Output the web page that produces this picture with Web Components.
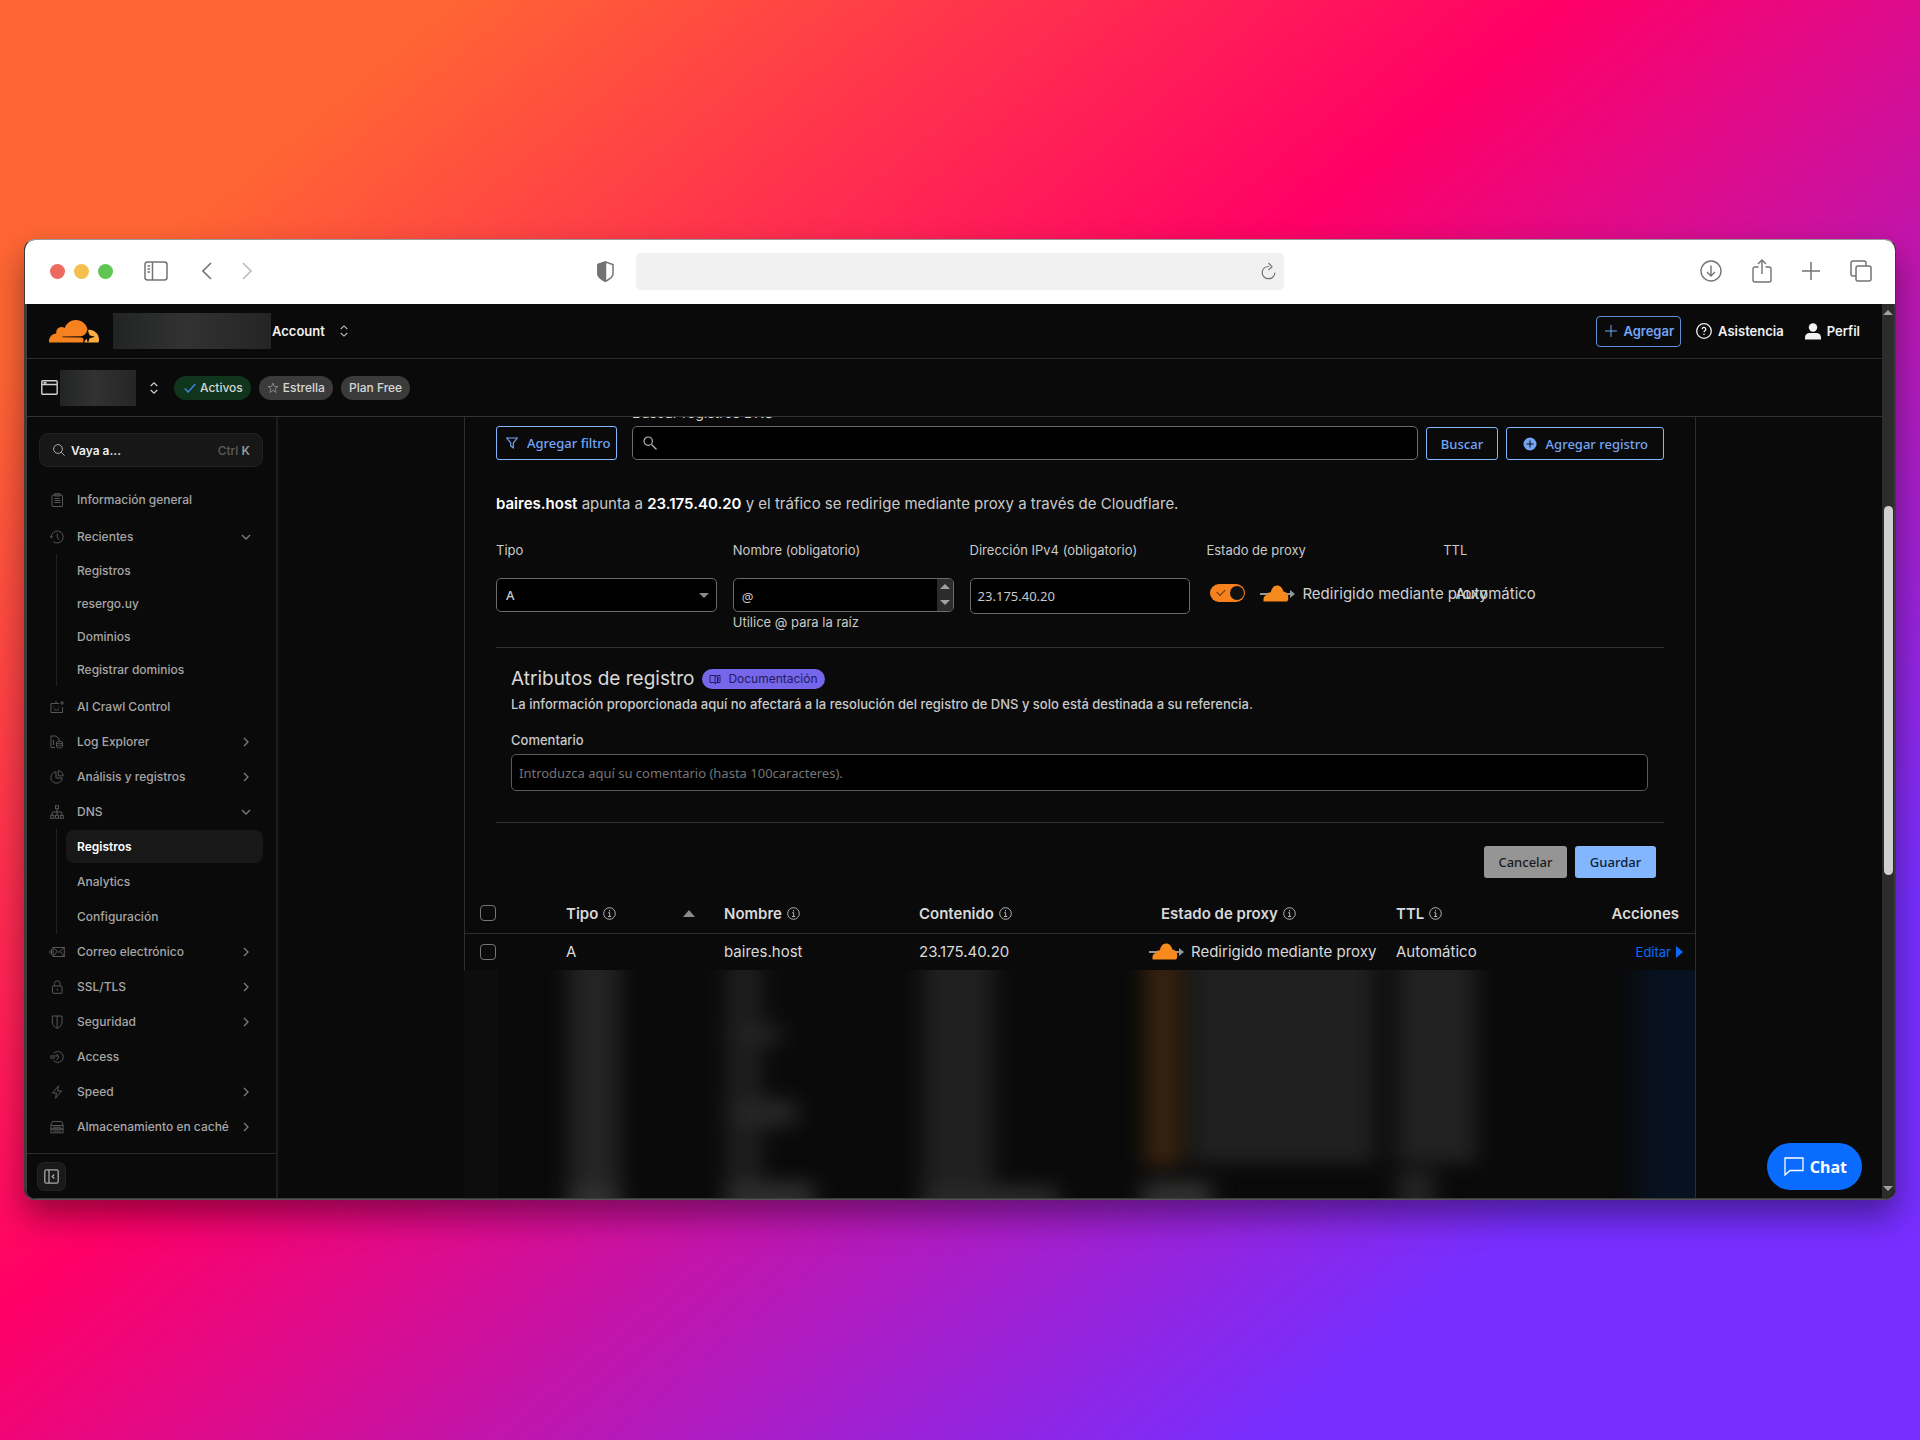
<!DOCTYPE html>
<html lang="es">
<head>
<meta charset="utf-8">
<meta name="viewport" content="width=device-width, initial-scale=1">
<title>Registros DNS</title>
<style>
  html, body { margin: 0; height: 100%; }
  body {
    box-sizing: border-box;
    min-height: 100vh;
    padding: 239px 24px 240px;
    display: flex;
    font-family: Inter, "Noto Sans", sans-serif;
    color: #d9d9d9;
    background: linear-gradient(140deg, #ff6633 12%, #ff0066 43%, #772eff 82%);
    --bg: #0a0a0a;
    --line: #2b2b2b;
    --blue: #82b6ff;
    --ui: "Noto Sans", "Open Sans", sans-serif;
  }
</style>
</head>
<body>
<browser-window>
  <browser-toolbar slot="toolbar"></browser-toolbar>
  <dash-app></dash-app>
</browser-window>

<script>
const ICONS = {
  panel: ['0 0 24 20', '<rect x="1" y="1" width="22" height="18" rx="2.5"/><path d="M8.5 1v18M3.5 5h2.5M3.5 8h2.5M3.5 11h2.5"/>'],
  back: ['0 0 10 18', '<path d="M9 1 1 9l8 8"/>'],
  forward: ['0 0 10 18', '<path d="m1 1 8 8-8 8"/>'],
  shield: ['0 0 17 21', '<path d="M8.500 1 1 3.500V13c0 3 3 5 7.500 7.300C13 18 16 16 16 13V3.500z"/><path d="M8.500 1 1 3.500V13c0 3 3 5 7.500 7.300z" fill="currentColor"/>'],
  reload: ['0 0 15 18', '<path d="M8 4.500C4 4.500 1.200 7 1.200 10.700a6.300 6 0 0 0 12.600 0"/><path d="M7.500 1l3.500 3.700L7.500 8.200"/>'],
  download: ['0 0 22 22', '<circle cx="11" cy="11" r="10"/><path d="M11 5.500v10M7 12l4 4 4-4"/>'],
  share: ['0 0 20 24', '<path d="M6.500 8H3a2 2 0 0 0-2 2v11a2 2 0 0 0 2 2h14a2 2 0 0 0 2-2V10a2 2 0 0 0-2-2h-3.500M10 15V1M6 5l4-4 4 4"/>'],
  plus: ['0 0 18 18', '<path d="M9 0v18M0 9h18"/>'],
  tabs: ['0 0 22 22', '<rect x="6" y="6" width="15" height="15" rx="2"/><path d="M6 16H3a2 2 0 0 1-2-2V3a2 2 0 0 1 2-2h11a2 2 0 0 1 2 2v3"/>'],
  updown: ['0 0 8 12', '<path d="M.7 4 4 .9 7.300 4M.7 8 4 11.100 7.300 8"/>'],
  help: ['0 0 16 16', '<circle cx="8" cy="8" r="7.300"/><path d="M6.200 6.300a1.800 1.800 0 1 1 2.700 1.500c-.7.4-.9.7-.9 1.400M8 10.700v1.300"/>'],
  person: ['0 0 16 17', '<g fill="currentColor" stroke="none"><circle cx="8" cy="4.500" r="4.200"/><path d="M0 16.500v-2C0 11.500 2 10 4.500 10h7c2.500 0 4.500 1.500 4.500 4.500v2z"/></g>'],
  window: ['0 0 17 15', '<rect x=".8" y=".8" width="15.400" height="13.400" rx="1"/><path d="M1 4.500h15M2.500 2.700h3"/>'],
  check: ['0 0 12 10', '<path d="m.7 5.500 3.500 3.500L11.300 1"/>'],
  star: ['0 0 14 14', '<path d="m7 1.200 1.600 4h4.200L9.500 7.900l1.200 4.400L7 9.800l-3.700 2.500 1.200-4.400L1.200 5.200h4.200z"/>'],
  search: ['0 0 12 12', '<circle cx="5" cy="5" r="4.400"/><path d="m8.200 8.200 3.400 3.400"/>'],
  searchbig: ['0 0 14 14', '<circle cx="5.200" cy="5.200" r="4.200"/><path d="m8.500 8.500 5 5"/>'],
  down: ['0 0 10 6', '<path d="m1 1 4 4 4-4"/>'],
  right: ['0 0 6 10', '<path d="m1 1 4 4-4 4"/>'],
  clipboard: ['0 0 14 14', '<rect x="2" y="2" width="10.500" height="11.500" rx=".5"/><path d="M4.500 2V.7h5.500V3H4.500zM4.500 5.500h5M4.500 7.500h6M4.500 9.500h6"/>'],
  clock: ['0 0 14 14', '<path d="M1.200 7a6 6 0 1 1 2 4.500M0 6l1.400 2L3 6.500M7.300 3.500V7l2 3"/>'],
  robot: ['0 0 14 14', '<path d="M9 3.500H1v9h11.500V7M6 3.500V1M12 1v4M10 3h4M4 6.500v1M9 6.500v1M4 9c1 1.500 4 1.500 5 0"/>'],
  logs: ['0 0 14 14', '<path d="M5 12.500H1V1h5l3 3v2M3.500 5v5"/><ellipse cx="9.500" cy="7.500" rx="3" ry="1.300"/><path d="M6.500 7.500v4.200c0 1.600 6 1.600 6 0V7.500M6.500 9.700c0 1.500 6 1.500 6 0"/>'],
  pie: ['0 0 14 14', '<path d="M6 1.800A5.700 5.700 0 1 0 12.200 8H6z"/><path d="M8.200.8v5h5a5 5 0 0 0-5-5z"/>'],
  tree: ['0 0 14 14', '<rect x="5.500" y=".7" width="3" height="3"/><rect x=".7" y="10.300" width="3" height="3"/><rect x="5.500" y="10.300" width="3" height="3"/><rect x="10.300" y="10.300" width="3" height="3"/><path d="M7 3.700v6.500M2.200 10.300V7h9.600v3.300"/>'],
  mail: ['0 0 16 14', '<rect x="4" y="2.500" width="11.300" height="9"/><path d="m4 2.500 5.700 5 5.600-5M4 11.500l4-5M15.300 11.500l-4-5M2.500 4v6M.8 5.500v3"/>'],
  lock: ['0 0 14 14', '<rect x="2.500" y="6" width="9.500" height="7.300" rx=".5"/><path d="M4.500 6V3.500a2.700 2.700 0 0 1 5.500 0V6M7.300 8.700v2"/>'],
  badge: ['0 0 14 14', '<path d="M2.300 1h9.700v6c0 3.500-2.500 5.500-4.800 6.300C4.800 12.500 2.300 10.500 2.300 7zM7.100 1v12"/>'],
  access: ['0 0 14 14', '<path d="M3.500 3.500a5.500 5.500 0 1 1 0 7M0 6h8M0 8h5M6.500 3.800 9 7 6.500 10.200"/>'],
  bolt: ['0 0 14 14', '<path d="M8.500.8 2.500 8h4l-1 5.300L11.500 6h-4z"/>'],
  drive: ['0 0 14 14', '<path d="M2.500 1.500h9L13 4.500v1H1v-1z"/><rect x="1" y="5.500" width="12" height="3.500"/><rect x="1" y="9" width="12" height="3.800"/><path d="M3 7.200h8M3 11h8"/>'],
  collapse: ['0 0 15 15', '<rect x=".8" y=".8" width="13.400" height="13.400" rx="1.500"/><path d="M5 1v13M10.200 5.500l-2 2 2 2"/>'],
  filter: ['0 0 12 12', '<path d="M.7 1h10.600L7.300 6v4.800L4.700 9V6z"/>'],
  addcircle: ['0 0 14 14', '<circle cx="7" cy="7" r="6.500" fill="currentColor" stroke="none"/><path d="M7 3.500v7M3.500 7h7" stroke="#0a0a0a"/>'],
  info: ['0 0 13 13', '<circle cx="6.500" cy="6.500" r="5.800"/><path d="M6.500 3v1.400M5.200 5.700h1.500V9.500M5 9.500h3.200"/>'],
  book: ['0 0 12 10', '<path d="M6 1.500H1v7h4l1 1 1-1h4v-7H7.500M6 1.500v8M6 1.500 8.500 3v5L6 9.500M9 4h1M9 6h1"/>'],
  chat: ['0 0 20 19', '<path d="M1 1h18v12.500H6L1 18z"/>'],
  logo: ['0 6.3 24 11.2', '<g stroke="none"><path fill="#f6821f" d="M16.5088 16.8447c.1475-.5068.0908-.9707-.1553-1.3154-.2246-.3164-.6045-.499-1.0615-.5205l-8.6592-.1123a.1559.1559 0 0 1-.1333-.0713c-.0283-.042-.0351-.0986-.021-.1553.0278-.084.1123-.1484.2036-.1562l8.7359-.1123c1.0351-.0489 2.1601-.8868 2.5537-1.9136l.499-1.3013c.0215-.0561.0293-.1128.0147-.168-.5625-2.5463-2.835-4.4453-5.5499-4.4453-2.5039 0-4.6284 1.6177-5.3876 3.8614-.4927-.3658-1.1187-.5625-1.794-.499-1.2026.119-2.1665 1.083-2.2861 2.2856-.0283.31-.0069.6128.0635.894C1.5683 13.171 0 14.7754 0 16.752c0 .1748.0142.3515.0352.5273.0141.083.0844.1475.1689.1475h15.9814c.0909 0 .1758-.0645.2032-.1553l.12-.4268z"/><path fill="#fbad41" d="M19.2656 11.2813c-.0771 0-.1611 0-.2383.0112-.0566 0-.1054.0415-.127.0976l-.3378 1.1744c-.1475.5068-.0918.9707.1543 1.3164.2256.3164.6055.498 1.0625.5195l1.8437.1133c.0557 0 .1055.0263.1329.0703.0283.043.0351.1074.0214.1562-.0283.084-.1132.1485-.204.1553l-1.921.1123c-1.041.0488-2.1582.8867-2.5527 1.914l-.1406.3585c-.0283.0713.0215.1416.0986.1416h6.5977c.0771 0 .1474-.0489.169-.126.1122-.4082.1757-.837.1757-1.2803 0-2.6025-2.125-4.727-4.7344-4.727"/><path fill="#0a0a0a" d="m18.700 11.800.75 2.150 2.150.75-2.150.75-.75 2.150-.75-2.150-2.150-.75 2.150-.75z"/></g>'],
  cloud: ['0 0 35 17', '<g stroke="none"><path fill="#92979b" d="M0 8h30V5l5 4-5 4v-3H0z"/><path fill="#f68a1d" d="M3.500 16.500v-2.300c0-2.400 1.700-4 3.600-4.100C7.300 8 9 7 10.800 7.400 11.600 3.300 13.800.5 17 .5c3.400 0 5.800 2.600 6.300 6.100 3 .2 5 2.700 5 6.400 0 1.500-.4 2.600-1.300 3.500z"/></g>']
};

function define(name, css, html) {
  const tpl = document.createElement('template');
  tpl.innerHTML = '<style>*{box-sizing:border-box}' + css + '</style>' + html;
  customElements.define(name, class extends HTMLElement {
    connectedCallback() {
      if (this.shadowRoot) return;
      this.attachShadow({ mode: 'open' }).append(tpl.content.cloneNode(true));
    }
  });
}

/* <ui-icon name w h sw>: one glyph from the icon table */
customElements.define('ui-icon', class extends HTMLElement {
  connectedCallback() {
    if (this.shadowRoot) return;
    const [box, body] = ICONS[this.getAttribute('name')];
    const [, , w, h] = box.split(' ');
    const width = this.getAttribute('w') || w, height = this.getAttribute('h') || h;
    this.attachShadow({ mode: 'open' }).innerHTML =
      `<style>:host{display:inline-flex;flex:none}svg{display:block}</style>
       <svg viewBox="${box}" width="${width}" height="${height}" fill="none" stroke="currentColor" stroke-width="${this.getAttribute('sw') || 1}" aria-hidden="true">${body}</svg>`;
  }
});

define('browser-window', `
  :host { display: flex; flex-direction: column; flex: 1; min-width: 0; overflow: hidden;
    border: 1px solid #8a8a8a; border-color: #9a9a9a #3c3c3c #555 #3c3c3c; border-radius: 11px; background: var(--bg);
    box-shadow: 0 16px 32px rgba(0,0,0,.4); }
  main { flex: 1; display: flex; min-height: 0; border: solid #3c3c3c; border-width: 0 1px 1px 2px; border-radius: 0 0 9px 9px; overflow: hidden; }
  ::slotted(*) { flex: 1; }
  ::slotted([slot=toolbar]) { flex: none; }`,
  `<slot name="toolbar"></slot><main><slot></slot></main>`);

define('browser-toolbar', `
  :host { display: grid; grid-template-columns: 1fr 34.6% 1fr; align-items: center; box-sizing: border-box; height: 64px; padding-bottom: 2px; background: #fff; color: #737373; }
  .l, .r { display: flex; align-items: center; }
  .l { padding: 0 22px 0 25px; }
  .dots { display: flex; gap: 9px; margin-right: 31px; }
  i { width: 15px; height: 15px; border-radius: 50%; }
  button { all: unset; display: flex; }
  .back { margin-left: 34px; } .fwd { margin-left: 30px; color: #bdbdbd; }
  .sh { margin-left: auto; }
  .r { justify-content: flex-end; gap: 30px; padding-right: 23px; }
  .url { display: flex; align-items: center; height: 37px; background: #f1f1f1; border-radius: 5px; padding-right: 8px; }
  input { all: unset; flex: 1; min-width: 0; }`,
  `<div class="l"><div class="dots"><i style="background:#ed6a5e"></i><i style="background:#f5bf4f"></i><i style="background:#61c554"></i></div>
    <button aria-label="Panel lateral"><ui-icon name="panel" sw="1.5"></ui-icon></button>
    <button class="back" aria-label="Atrás"><ui-icon name="back" sw="1.6"></ui-icon></button>
    <button class="fwd" aria-label="Adelante"><ui-icon name="forward" sw="1.6"></ui-icon></button>
    <ui-icon class="sh" name="shield" sw="1.5"></ui-icon></div>
  <div class="url"><input aria-label="Dirección web"><button aria-label="Recargar"><ui-icon name="reload" sw="1.200"></ui-icon></button></div>
  <div class="r"><button aria-label="Descargas"><ui-icon name="download" sw="1.400"></ui-icon></button>
    <button aria-label="Compartir"><ui-icon name="share" sw="1.400"></ui-icon></button>
    <button aria-label="Nueva pestaña"><ui-icon name="plus" sw="1.500"></ui-icon></button>
    <button aria-label="Pestañas"><ui-icon name="tabs" sw="1.500"></ui-icon></button></div>`);

define('dash-app', `
  :host { display: flex; min-width: 0; min-height: 0; background: var(--bg); }
  .page { flex: 1; min-width: 0; display: flex; flex-direction: column; position: relative; }
  .body { flex: 1; min-height: 0; display: flex; }
  main { flex: 1; min-width: 0; overflow: hidden; }
  chat-button { position: absolute; right: 20px; bottom: 8px; }`,
  `<div class="page"><account-bar></account-bar><zone-bar></zone-bar>
     <div class="body"><side-nav></side-nav><main><dns-card></dns-card></main></div>
     <chat-button></chat-button></div>
   <page-scrollbar></page-scrollbar>`);

define('page-scrollbar', `
  :host { display: flex; flex-direction: column; align-items: center; justify-content: space-between; width: 12px; padding: 6px 0 7px; background: #2c2c2c; }
  .up, .dn { border: 5px solid transparent; border-top: 0; border-bottom-color: #a0a0a0; }
  .dn { border: 5px solid transparent; border-bottom: 0; border-top-color: #a0a0a0; }
  .rail { flex: 1; display: flex; flex-direction: column; }
  .rail::before { content: ''; flex: 191; } .rail::after { content: ''; flex: 311; }
  .thumb { flex: 370; width: 9px; border-radius: 5px; background: #cfcfcf; }`,
  `<span class="up"></span><div class="rail"><div class="thumb"></div></div><span class="dn"></span>`);

define('redacted-box', `
  :host { display: block; height: 36px; background: linear-gradient(90deg, #222424, #323232 45%, #252525); }`, ``);

define('account-bar', `
  :host { display: flex; align-items: center; height: 55px; padding: 0 22px 0 22px; border-bottom: 1px solid var(--line); font-size: 13px; font-weight: 600; color: #f2f2f2; }
  :host, button, a { box-sizing: border-box; }
  redacted-box { width: 158px; margin: 0 1px 0 14px; }
  button, a { all: unset; box-sizing: border-box; display: flex; align-items: center; cursor: pointer; }
  .acc { gap: 15px; color: #f2f2f2; }
  .acc ui-icon { color: #bbb; }
  .right { margin-left: auto; display: flex; align-items: center; }
  .add { height: 31px; padding: 0 6px 0 8px; gap: 6px; border: 1px solid #5d8ed6; border-radius: 4px; color: #74a5f5; margin-right: 15px; }
  .help { gap: 6px; margin-right: 21px; } .me { gap: 6px; }`,
  `<a href="#" aria-label="Inicio"><ui-icon name="logo" w="50" h="24"></ui-icon></a><redacted-box></redacted-box>
   <button class="acc">Account<ui-icon name="updown" sw="1.100"></ui-icon></button>
   <div class="right"><button class="add"><ui-icon name="plus" w="12" h="12" sw="1.500"></ui-icon>Agregar</button>
   <button class="help"><ui-icon name="help" sw="1.300"></ui-icon>Asistencia</button>
   <button class="me"><ui-icon name="person"></ui-icon>Perfil</button></div>`);

define('status-pill', `
  :host { display: inline-flex; align-items: center; gap: 4px; height: 24px; padding: 0 8px; border-radius: 12px; background: #3b3b3b; color: #d6d6d6; font-size: 12px; font-weight: 500; white-space: nowrap; box-sizing: border-box; }
  :host([green]) { background: #0f361d; padding-left: 10px; }`, `<slot></slot>`);

define('zone-bar', `
  :host { display: flex; align-items: center; height: 58px; box-sizing: border-box; padding-left: 14px; border-bottom: 1px solid #333; color: #d0d0d0; }
  redacted-box { width: 76px; margin: 0 14px 0 2px; }
  button { all: unset; display: flex; margin-right: 16px; }
  .pills { display: flex; gap: 8px; }`,
  `<ui-icon name="window" sw="1.400"></ui-icon><redacted-box></redacted-box>
   <button aria-label="Cambiar dominio"><ui-icon name="updown" sw="1.200"></ui-icon></button>
   <div class="pills"><status-pill green><ui-icon name="check" sw="1.300" style="color:#3f86e8"></ui-icon>Activos</status-pill>
   <status-pill><ui-icon name="star" w="12" h="12" style="color:#8f8f8f"></ui-icon>Estrella</status-pill><status-pill>Plan Free</status-pill></div>`);

/* <nav-item icon arrow sub active>label</nav-item> */
customElements.define('nav-item', class extends HTMLElement {
  connectedCallback() {
    if (this.shadowRoot) return;
    const icon = this.getAttribute('icon'), arrow = this.getAttribute('arrow');
    this.attachShadow({ mode: 'open' }).innerHTML = `<style>
      *{box-sizing:border-box}
      :host { display: flex; align-items: center; height: 35px; }
      a { flex: 1; display: flex; align-items: center; height: 33px; padding: 0 12px 0 11px; border-radius: 8px; color: #a6a6a6; text-decoration: none; white-space: nowrap; }
      .ic { width: 14px; display: flex; justify-content: center; margin-right: 13px; color: #565656; }
      .ar { margin-left: auto; width: 10px; display: flex; justify-content: center; color: #7d7d7d; }
      :host([active]) a { background: #181818; color: #fff; font-weight: 600; }
      :host([short]) { height: 33px; }
    </style><a href="#">${icon ? `<span class="ic"><ui-icon name="${icon}"></ui-icon></span>` : ''}<slot></slot>${arrow ? `<span class="ar"><ui-icon name="${arrow}" sw="1.300"></ui-icon></span>` : ''}</a>`;
  }
});

define('side-nav', `
  :host { display: flex; flex-direction: column; width: 251px; border-right: 2px solid #1d1d1d; font-size: 12px; font-weight: 500; }
  .go { display: flex; align-items: center; gap: 6px; height: 34px; margin: 16px 13px 15px 12px; padding: 0 12px 0 13px; border: 1px solid #222; border-radius: 9px; background: #171717; color: #ededed; }
  .go button { all: unset; flex: 1; font-size: 12px; font-weight: 600; }
  .go ui-icon { color: #aaa; }
  kbd { font: 500 12px Inter, sans-serif; color: #5c5c5c; } kbd b { font-weight: 600; color: #999; }
  nav { flex: 1; padding: 0 13px 0 12px; }
  .gap { margin-bottom: 2px; }
  .sub { margin: 0 0 0 17px; padding-left: 9px; border-left: 1px solid #222; }
  .rec { margin-bottom: 3px; }
  .foot { display: flex; align-items: center; height: 45px; padding-left: 10px; border-top: 1px solid var(--line); }
  .foot button { all: unset; display: grid; place-items: center; width: 29px; height: 29px; border-radius: 7px; background: #1a1a1a; outline: 1px solid #232323; outline-offset: -1px; color: #a8a8a8; }`,
  `<div class="go"><ui-icon name="search"></ui-icon><button>Vaya a...</button><kbd>Ctrl <b>K</b></kbd></div>
  <nav>
    <nav-item class="gap" icon="clipboard">Información general</nav-item>
    <nav-item icon="clock" arrow="down">Recientes</nav-item>
    <div class="sub rec"><nav-item short>Registros</nav-item><nav-item short>resergo.uy</nav-item><nav-item short>Dominios</nav-item><nav-item short>Registrar dominios</nav-item></div>
    <nav-item icon="robot">AI Crawl Control</nav-item>
    <nav-item icon="logs" arrow="right">Log Explorer</nav-item>
    <nav-item icon="pie" arrow="right">Análisis y registros</nav-item>
    <nav-item icon="tree" arrow="down">DNS</nav-item>
    <div class="sub"><nav-item active>Registros</nav-item><nav-item>Analytics</nav-item><nav-item>Configuración</nav-item></div>
    <nav-item icon="mail" arrow="right">Correo electrónico</nav-item>
    <nav-item icon="lock" arrow="right">SSL/TLS</nav-item>
    <nav-item icon="badge" arrow="right">Seguridad</nav-item>
    <nav-item icon="access">Access</nav-item>
    <nav-item icon="bolt" arrow="right">Speed</nav-item>
    <nav-item icon="drive" arrow="right">Almacenamiento en caché</nav-item>
  </nav>
  <div class="foot"><button aria-label="Contraer menú"><ui-icon name="collapse" sw="1.300"></ui-icon></button></div>`);

define('chat-button', `
  button { all: unset; box-sizing: border-box; display: flex; align-items: center; gap: 6px; height: 47px; padding: 0 15px 0 17px; border-radius: 24px; background: #0a6cff; color: #fff; font: 700 16px/24px var(--ui); cursor: pointer; }`,
  `<button><ui-icon name="chat" w="20" h="19" sw="1.300"></ui-icon>Chat</button>`);

define('dns-card', `
  :host { display: block; max-width: 1232px; margin: 0 auto; }
  .top { border: solid #2e2e2e; border-width: 0 1px; }`,
  `<div class="top"><search-row></search-row><record-form></record-form><dns-table></dns-table></div><blurred-rows></blurred-rows>`);

define('search-row', `
  :host { display: flex; align-items: flex-end; margin: -15px 31px 0; padding-bottom: 32px; font-size: 14px; }
  button { box-sizing: border-box; margin: 0; height: 33px; padding: 0 11px; display: flex; align-items: center; border: 1px solid #82b6ff; border-radius: 3px; background: transparent; color: #74a5f5; font: 500 13px/18px var(--ui); white-space: nowrap; cursor: pointer; }
  .f { gap: 9px; width: 121px; padding: 0 7px 0 9px; height: 34px; }
  .q { flex: 1; min-width: 0; margin: 0 8px 0 15px; display: flex; flex-direction: column; }
  label { height: 24px; line-height: 22px; color: #d9d9d9; }
  .box { display: flex; align-items: center; height: 34px; padding-left: 10px; border: 1px solid #6b6b6b; border-radius: 5px; background: #000; color: #b5b5b5; }
  input { all: unset; flex: 1; min-width: 0; padding: 0 8px; }
  .b { width: 72px; justify-content: center; margin-right: 8px; }
  .r { width: 158px; padding: 0 15px 0 16px; justify-content: space-between; }
  `,
  `<button class="f"><ui-icon name="filter" sw="1.200"></ui-icon>Agregar filtro</button>
   <div class="q"><label for="q">Buscar registros DNS</label><div class="box"><ui-icon name="searchbig" sw="1.200"></ui-icon><input id="q"></div></div>
   <button class="b">Buscar</button><button class="r"><ui-icon name="addcircle"></ui-icon>Agregar registro</button>`);

define('record-form', `
  :host { display: block; margin: 0 31px; font-size: 14px; color: #c9c9c9; }
  p { margin: 0; }
  .sum { font-size: 15px; line-height: 24px; margin-bottom: 21px; } .sum b { color: #fff; font-weight: 600; }
  .grid { display: grid; grid-template-columns: repeat(5, minmax(0, 1fr)); gap: 16px; height: 111px; border-bottom: 1px solid #333; font-size: 13px; }
  .grid > div { padding-top: 3px; white-space: nowrap; }
  .lb { display: block; line-height: 20px; margin-bottom: 18px; }
  .field, select, .ip { width: 100%; height: 34px; border: 1px solid #6b6b6b; border-radius: 5px; background: #000; color: #c9c9c9; font: 13px/20px var(--ui); }
  .field { display: flex; overflow: hidden; }
  select { appearance: none; padding: 0 9px; font-weight: 500; display: block; }
  .sel { display: grid; } .sel > * { grid-area: 1/1; }
  .sel span { justify-self: end; align-self: center; margin-right: 8px; border: 5px solid transparent; border-bottom: 0; border-top-color: #8a8a8a; }
  textarea { flex: 1; min-width: 0; border: 0; padding: 8px 8px 0; background: none; resize: none; overflow: hidden; color: inherit; font: inherit; }
  .spin { width: 16px; background: #2c2c2c; display: flex; flex-direction: column; align-items: center; justify-content: space-between; padding: 5px 0 6px; }
  .spin i { border: 5px solid transparent; border-top: 0; border-bottom-color: #a0a0a0; }
  .spin i + i { border: 5px solid transparent; border-bottom: 0; border-top-color: #a0a0a0; }
  .ip { height: 36px; padding: 0 7px; }
  .hint { display: block; line-height: 20px; }
  .proxy { display: flex; align-items: center; height: 30px; padding-left: 4px; font-size: 15px; color: #d0d0d0; }
  .proxy input { appearance: none; margin: 0 15px 0 0; width: 35px; height: 18px; border-radius: 9px; background: #f6821f; border: 0; display: flex; align-items: center; flex: none; }
  .proxy input::before { content: ''; width: 7px; height: 4px; margin: -3px 0 0 7px; border: solid #5a2f08; border-width: 0 0 1px 1px; rotate: -45deg; }
  .proxy input::after { content: ''; width: 14px; height: 14px; margin-left: 5px; border-radius: 50%; background: #111; }
  .proxy label { margin-left: 7px; }
  .ttl { line-height: 32px; padding-left: 12px; font-size: 15px; color: #d0d0d0; display: block; }
  .attr { padding: 18px 16px 31px 15px; border-bottom: 1px solid #333; }
  h3 { margin: 0; font-size: 19px; font-weight: 400; line-height: 26px; color: #d9d9d9; display: flex; align-items: center; gap: 8px; }
  .doc { display: inline-flex; align-items: center; gap: 7px; height: 20px; padding: 0 7px; border-radius: 10px; background: #7566ea; color: #211a63; font-size: 12px; text-decoration: none; }
  .note { font-size: 13px; font-weight: 500; line-height: 18px; margin-top: 3px; color: #c9c9c9; }
  .cl { display: block; font-size: 13px; font-weight: 500; line-height: 20px; margin: 17px 0 4px; color: #c9c9c9; }
  .com { display: block; width: 100%; height: 37px; border: 1px solid #5a5a5a; border-radius: 5px; background: #000; color: #ccc; padding: 0 7px; font: 13px/20px var(--ui); }
  .com::placeholder { color: #757575; opacity: 1; }
  .act { display: flex; justify-content: flex-end; gap: 8px; padding: 23px 8px 16px; }
  .act button { height: 32px; border: 0; border-radius: 3px; padding: 0; width: 83px; background: #959595; color: #1b1b1b; font: 500 13px/18px var(--ui); }
  .act .save { width: 81px; background: #82b6ff; color: #0d1d36; }`,
  `<p class="sum"><b>baires.host</b> apunta a <b>23.175.40.20</b> y el tráfico se redirige mediante proxy a través de Cloudflare.</p>
  <div class="grid">
    <div><label class="lb" for="t">Tipo</label><div class="sel"><select id="t"><option>A</option></select><span></span></div></div>
    <div><label class="lb" for="n">Nombre (obligatorio)</label><div class="field"><textarea id="n" rows="1">@</textarea><div class="spin"><i></i><i></i></div></div><span class="hint">Utilice @ para la raíz</span></div>
    <div><label class="lb" for="ip">Dirección IPv4 (obligatorio)</label><input class="ip" id="ip" value="23.175.40.20"></div>
    <div><span class="lb">Estado de proxy</span><div class="proxy"><input type="checkbox" role="switch" id="px" checked><ui-icon name="cloud" w="35" h="17"></ui-icon><label for="px">Redirigido mediante proxy</label></div></div>
    <div><span class="lb">TTL</span><span class="ttl">Automático</span></div>
  </div>
  <div class="attr"><h3>Atributos de registro <a class="doc" href="#"><ui-icon name="book"></ui-icon>Documentación</a></h3>
    <p class="note">La información proporcionada aquí no afectará a la resolución del registro de DNS y solo está destinada a su referencia.</p>
    <label class="cl" for="c">Comentario</label><input class="com" id="c" placeholder="Introduzca aquí su comentario (hasta 100caracteres)."></div>
  <div class="act"><button>Cancelar</button><button class="save">Guardar</button></div>`);

define('dns-table', `
  :host { display: block; font-size: 15px; color: #d9d9d9; }
  table { width: 100%; border-collapse: collapse; table-layout: fixed; }
  th, td { padding: 0; text-align: left; white-space: nowrap; font-weight: 400; }
  th { height: 39px; font-weight: 600; border-bottom: 1px solid #2b2b2b; }
  td { height: 37px; }
  .in { display: flex; align-items: center; gap: 5px; }
  .in ui-icon { color: #b5b5b5; }
  input { appearance: none; display: block; margin: 0 0 0 15px; width: 16px; height: 16px; border: 1px solid #767676; border-radius: 4px; background: transparent; }
  .sort { margin: 0 29px 0 auto; border: 6px solid transparent; border-top: 0; border-bottom: 7px solid #8a8a8a; }
  .px { gap: 7px; } 
  th .px { padding-left: 12px; gap: 5px; }
  .r { justify-content: flex-end; padding-right: 16px; }
  td .r { padding-right: 12px; }
  a { color: #0b6bff; text-decoration: none; font-size: 13px; display: flex; align-items: center; gap: 5px; }
  a::after { content: ''; border: 6px solid transparent; border-right: 0; border-left: 7px solid #0b6bff; }`,
  `<table><colgroup><col style="width:101px"><col style="width:158px"><col style="width:195px"><col style="width:230px"><col style="width:247px"><col style="width:150px"><col></colgroup>
  <thead><tr><th><input type="checkbox" aria-label="Seleccionar todo"></th><th><div class="in">Tipo <ui-icon name="info"></ui-icon><span class="sort"></span></div></th><th><div class="in">Nombre <ui-icon name="info"></ui-icon></div></th><th><div class="in">Contenido <ui-icon name="info"></ui-icon></div></th><th><div class="in px">Estado de proxy <ui-icon name="info"></ui-icon></div></th><th><div class="in">TTL <ui-icon name="info"></ui-icon></div></th><th><div class="in r">Acciones</div></th></tr></thead>
  <tbody><tr><td><input type="checkbox" aria-label="Seleccionar baires.host"></td><td>A</td><td>baires.host</td><td>23.175.40.20</td><td><div class="in px"><ui-icon name="cloud" w="35" h="17"></ui-icon>Redirigido mediante proxy</div></td><td>Automático</td><td><div class="in r"><a href="#">Editar</a></div></td></tr></tbody></table>`);

/* rows hidden behind a frosted overlay */
define('blurred-rows', `
  :host { display: block; overflow: hidden; border-right: 1px solid #2e2e2e; }
  svg { display: block; width: 100%; height: 230px; }`,
  `<svg viewBox="464 969 1231 230" preserveAspectRatio="none" aria-hidden="true">
    <defs><filter id="b" filterUnits="userSpaceOnUse" x="400" y="850" width="1400" height="460" color-interpolation-filters="sRGB"><feGaussianBlur stdDeviation="11 9"/></filter></defs>
    <rect x="464" y="969" width="34" height="230" fill="#0d0d0d"/>
    <g filter="url(#b)"><rect x="568" y="930" width="52" height="300" fill="#242424"/><rect x="570" y="1184" width="50" height="60" fill="#303030"/>
    <rect x="726" y="930" width="36" height="300" fill="#1e1e1e"/><rect x="728" y="1022" width="52" height="22" fill="#222"/><rect x="730" y="1098" width="66" height="28" fill="#262626"/><rect x="726" y="1180" width="88" height="60" fill="#2c2c2c"/>
    <rect x="922" y="930" width="72" height="300" fill="#202020"/><rect x="922" y="1184" width="136" height="60" fill="#282828"/>
    <rect x="1145" y="930" width="36" height="235" fill="#38230f"/><rect x="1143" y="1180" width="68" height="60" fill="#303030"/>
    <rect x="1190" y="930" width="186" height="232" fill="#202020"/><rect x="1396" y="930" width="80" height="232" fill="#222"/><rect x="1398" y="1170" width="36" height="60" fill="#242424"/>
    <rect x="1636" y="930" width="100" height="320" fill="#08111f"/></g></svg>`);
</script>
</body>
</html>
